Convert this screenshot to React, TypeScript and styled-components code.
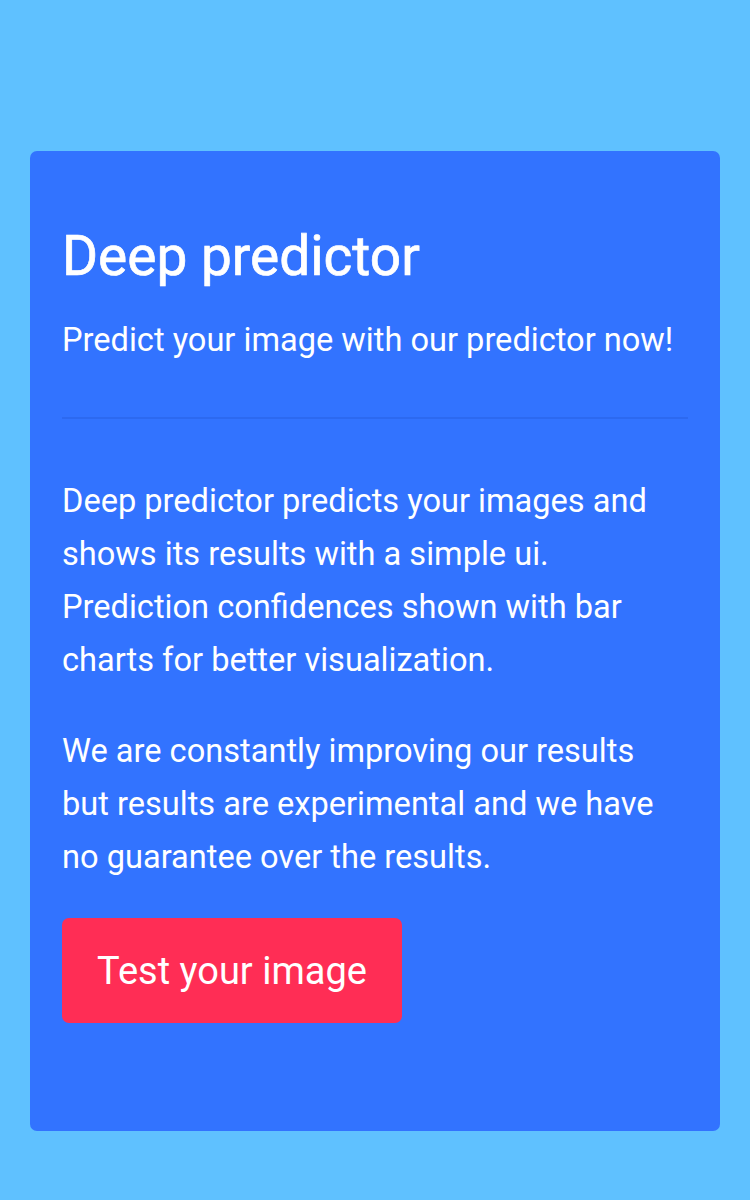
import React from 'react'
import styled, {createGlobalStyle} from 'styled-components'

const GlobalStyle = createGlobalStyle`
    html, body {
        margin: 0;
        padding: 0;
        background: #5fc1ff;
    }
    body {
        font-family: Roboto, "Noto Sans", "Liberation Sans", sans-serif;
        color: #ffffff;
    }
`

const Page = styled.div`
    padding: 151px 30px 68px;
`

const Jumbotron = styled.div`
    background: #3273ff;
    border-radius: 7px;
    padding: 72px 32px 108px;
`

const Title = styled.h1`
    margin: 0;
    font-size: 55px;
    font-weight: 400;
    line-height: 67px;
    -webkit-text-stroke: 0.7px #ffffff;
`

const Lead = styled.p`
    margin: 28px 0 0;
    font-size: 32.6px;
    font-weight: 400;
    line-height: 45px;
`

const Divider = styled.hr`
    margin: 54px 0 56px;
    border: 0;
    border-top: 2px solid #2c69f0;
`

const Paragraph = styled.p<{$spacing: number}>`
    margin: 0 0 ${props => props.$spacing}px;
    font-size: 32.6px;
    line-height: 53px;
`

const Button = styled.button`
    display: block;
    font: inherit;
    font-size: 38px;
    color: #ffffff;
    background: #ff2d55;
    border: 0;
    border-radius: 7px;
    width: 340px;
    height: 105px;
    padding: 0;
    cursor: pointer;

    &:hover {
        background: #f0204a;
    }
`

const App = () => {
    return (
        <Page>
            <GlobalStyle/>
            <Jumbotron>
                <Title>Deep predictor</Title>
                <Lead>Predict your image with our predictor now!</Lead>
                <Divider/>
                <Paragraph $spacing={38}>
                    Deep predictor predicts your images and shows its results with a simple ui.
                    Prediction confidences shown with bar charts for better visualization.
                </Paragraph>
                <Paragraph $spacing={34}>
                    We are constantly improving our results but results are experimental and we
                    have no guarantee over the results.
                </Paragraph>
                <Button type={'button'}>Test your image</Button>
            </Jumbotron>
        </Page>
    )
}

export default App
